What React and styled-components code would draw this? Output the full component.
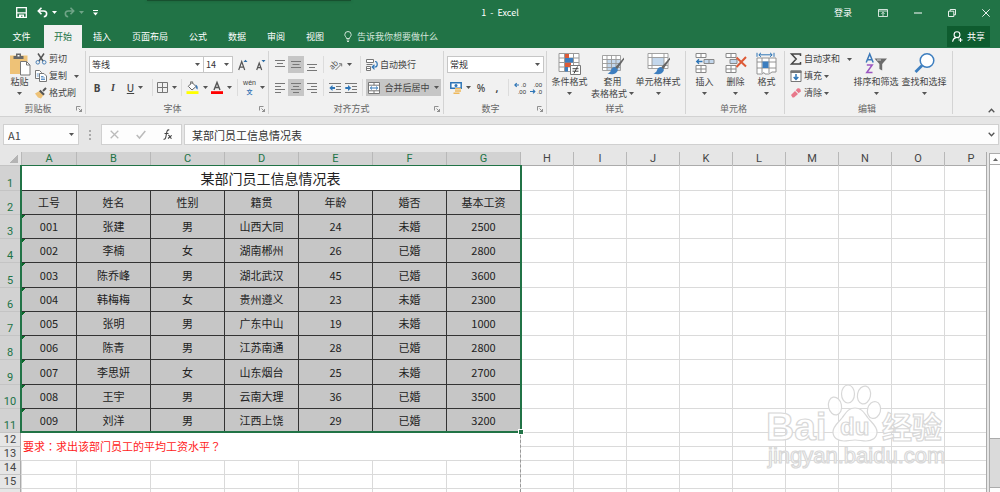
import React from "react";
import styled, { createGlobalStyle, css } from "styled-components";

const GlobalStyle = createGlobalStyle`
  * {
    box-sizing: border-box;
  }
  body {
    margin: 0;
    background: #e6e6e6;
    color: #444;
    font-family: "Noto Sans CJK SC", "Noto Sans", sans-serif;
    font-size: 9px;
    line-height: 12px;
  }
  button,
  input,
  select {
    margin: 0;
    padding: 0;
    border: 0;
    background: none;
    color: inherit;
    font: inherit;
    border-radius: 0;
    outline: 0;
  }
`;

const Window = styled.div`
  height: 100vh;
  display: flex;
  flex-direction: column;
  overflow: hidden;
`;

const Svg = styled.svg`
  display: block;
  flex: none;
  overflow: visible;
`;

/* ---------- title bar ---------- */

const TitleBar = styled.header`
  position: relative;
  flex: none;
  height: 25px;
  display: grid;
  grid-template-columns: 1fr auto 1fr;
  align-items: center;
  background: #217346;
  color: #fff;
`;

const TopShade = styled.div`
  position: absolute;
  top: 0;
  left: 147px;
  width: 204px;
  height: 1px;
  background: #17502f;
  box-shadow: 0 0 3px #17502f;
`;

const QuickAccess = styled.div`
  display: flex;
  align-items: center;
  padding-left: 16px;
`;

const QuickButton = styled.button`
  display: flex;
  align-items: center;
  gap: 4px;
  margin-right: ${(p) => p.$gap || 7}px;
  opacity: ${(p) => (p.disabled ? 0.35 : 1)};
  color: #fff;
`;

const Title = styled.div`
  white-space: pre;
`;

const WindowControls = styled.div`
  display: flex;
  align-items: center;
  justify-content: flex-end;
  gap: 26px;
  padding-right: 10px;
`;

/* ---------- tabs ---------- */

const TabBar = styled.nav`
  flex: none;
  height: 23px;
  display: flex;
  align-items: stretch;
  gap: 1px;
  background: #217346;
  color: #fff;
`;

const Tab = styled.button`
  padding: 0 10px;
  white-space: nowrap;
  ${(p) =>
    p.$active &&
    css`
      background: #f1f1f1;
      color: #217346;
    `}
`;

const FileTab = styled(Tab)`
  width: 43px;
`;

const TellMe = styled.label`
  display: flex;
  align-items: center;
  gap: 5px;
  flex: 1;
  padding-left: 9px;
  input {
    width: 120px;
  }
  input::placeholder {
    color: #d5e6dc;
    opacity: 1;
  }
`;

const Share = styled.button`
  display: flex;
  align-items: center;
  gap: 4px;
  margin: 1px 10px 1px 0;
  padding: 0 5px;
  background: #0e5c2f;
  color: #fff;
`;

/* ---------- ribbon ---------- */

const RibbonBar = styled.section`
  flex: none;
  height: 69px;
  display: flex;
  padding-top: 3px;
  background: #f1f1f1;
  border-bottom: 1px solid #d2d2d2;
`;

const GroupBox = styled.div`
  flex: 0 0 ${(p) => p.$width}px;
  min-width: 0;
  height: 63px;
  display: flex;
  flex-direction: column;
  border-right: 1px solid #d4d4d4;
`;

const GroupBody = styled.div`
  height: 52px;
  display: flex;
  padding-left: ${(p) => p.$pad || 0}px;
`;

const GroupFooter = styled.div`
  height: 11px;
  display: flex;
  align-items: center;
  padding-right: 3px;
  line-height: 11px;
  color: #666;
  span {
    flex: 1;
    text-align: center;
  }
`;

const Lines = styled.div`
  flex: 1;
  display: flex;
  flex-direction: column;
  gap: 6px;
  padding-top: 5px;
`;

const Line = styled.div`
  display: flex;
  align-items: center;
  height: 17px;
`;

const Stack = styled.div`
  flex: none;
  width: ${(p) => p.$width}px;
  display: flex;
  flex-direction: column;
  gap: 1px;
`;

const SmallButton = styled.button`
  height: 16px;
  display: flex;
  align-items: center;
  gap: 2px;
  white-space: nowrap;
  ${(p) =>
    p.$split &&
    css`
      > svg:last-child {
        margin-left: 5px;
      }
    `}
`;

const BigButton = styled.button`
  flex: none;
  width: ${(p) => p.$width}px;
  display: flex;
  flex-direction: column;
  align-items: center;
  padding-top: 1px;
  white-space: nowrap;
  > svg:last-child {
    margin-top: 4px;
  }
`;

const TwoLine = styled.span`
  display: flex;
  flex-direction: column;
  align-items: center;
  line-height: 12px;
  span {
    display: flex;
    align-items: center;
    gap: 2px;
    line-height: 11px;
  }
`;

const Tool = styled.button`
  flex: none;
  width: ${(p) => p.$width || 16}px;
  height: 17px;
  display: flex;
  align-items: center;
  justify-content: center;
  gap: 4px;
  white-space: nowrap;
  background: ${(p) => (p.$on ? "#c6c6c6" : "none")};
`;

const Letter = styled.span`
  font-family: "Noto Sans", sans-serif;
  font-size: 10px;
  font-weight: ${(p) => (p.$bold ? 700 : 500)};
  text-decoration: ${(p) => (p.$underline ? "underline" : "none")};
`;

const ItalicLetter = styled(Letter)`
  font-family: "Liberation Serif", serif;
  font-style: italic;
`;

const Divider = styled.i`
  flex: none;
  width: 1px;
  height: 17px;
  margin: 0 ${(p) => (p.$wide ? 5 : 3)}px;
  background: #dcdcdc;
`;

const ComboBox = styled.div`
  flex: none;
  width: ${(p) => p.$width}px;
  height: 17px;
  display: grid;
  align-items: center;
  background: #fff;
  border: 1px solid #c6c6c6;
  margin-left: ${(p) => (p.$joined ? -1 : 0)}px;
  > * {
    grid-area: 1 / 1;
  }
  > svg {
    justify-self: end;
    margin-right: 3px;
    pointer-events: none;
  }
  select {
    appearance: none;
    width: 100%;
    height: 15px;
    padding-left: 2px;
    line-height: 15px;
    color: #333;
  }
`;

const Collapse = styled.button`
  margin: auto 5px 3px auto;
`;

/* ---------- formula bar ---------- */

const FormulaBar = styled.div`
  flex: none;
  height: 35px;
  display: flex;
  align-items: center;
  padding: 0 1px 0 3px;
  font-size: 11px;
`;

const Field = styled.div`
  height: 21px;
  display: flex;
  align-items: center;
  background: #fdfdfd;
  border: 1px solid #d0d0d0;
`;

const NameBox = styled(Field)`
  width: 76px;
  padding: 0 4px;
  input {
    flex: 1;
    min-width: 0;
  }
`;

const Grip = styled(Svg)`
  margin: 0 10px;
`;

const FormulaTools = styled(Field)`
  width: 81px;
  justify-content: space-around;
`;

const FormulaInput = styled(Field)`
  flex: 1;
  margin-left: 2px;
  padding: 0 3px 0 7px;
  input {
    flex: 1;
    min-width: 0;
    color: #333;
  }
`;

/* ---------- sheet ---------- */

const SheetArea = styled.main`
  flex: 1;
  min-height: 0;
  display: flex;
`;

const Canvas = styled.div`
  position: relative;
  flex: 1;
  min-width: 0;
  overflow: hidden;
  border-right: 1px solid #ababab;
`;

const Grid = styled.table`
  table-layout: fixed;
  width: 964px;
  border-collapse: separate;
  border-spacing: 0;
  background: #fff;
  font-size: 11px;
  line-height: 13px;
  color: #222;
  th,
  td {
    padding: 0;
    text-align: center;
    font-weight: 400;
    white-space: nowrap;
  }
  th {
    font-family: Roboto, sans-serif;
  }
`;

const Col = styled.col`
  width: ${(p) => p.$width}px;
`;

const Corner = styled.th`
  height: 13px;
  background: linear-gradient(135deg, #e6e6e6 50%, #b4b4b4 50%) 10px 3px / 8px
    8px no-repeat #e6e6e6;
`;

const ColHead = styled.th`
  background: ${(p) => (p.$selected ? "#d2d2d2" : "#e6e6e6")};
  color: ${(p) => (p.$selected ? "#217346" : "#444")};
  border-left: 1px solid #b8b8b8;
`;

const Row = styled.tr`
  height: ${(p) => p.$height}px;
`;

const RowHead = styled.th`
  vertical-align: bottom;
  background: ${(p) => (p.$selected ? "#d2d2d2" : "#e6e6e6")};
  color: ${(p) => (p.$selected ? "#217346" : "#444")};
  border-top: 1px solid #c4c4c4;
  border-right: 1px solid #ababab;
`;

const Cell = styled.td`
  border-left: 1px solid #dadada;
  border-top: 1px solid ${(p) => (p.$first ? "#ababab" : "#dadada")};
`;

const DataCell = styled.td`
  background: #c6c6c6;
  border-left: 1px solid #333;
  border-top: 1px solid #333;
  ${(p) =>
    p.$flag &&
    css`
      background: linear-gradient(135deg, #0b6b2c 50%, transparent 50%) 0 0 /
        4px 4px no-repeat #c6c6c6;
    `}
`;

const TitleCell = styled.td`
  font-size: 14px;
  line-height: 18px;
`;

const NoteCell = styled.td`
  && {
    text-align: left;
    padding-left: 2px;
  }
  font-family: "Noto Sans CJK TC", sans-serif;
  color: #f22;
`;

const Selection = styled.div`
  position: absolute;
  top: 13px;
  left: 20px;
  width: 502px;
  height: 268px;
  border: 2px solid #217346;
  border-top-width: 1px;
  pointer-events: none;
  &::after {
    content: "";
    position: absolute;
    right: -3px;
    bottom: -3px;
    width: 4px;
    height: 4px;
    background: #217346;
    outline: 1px solid #fff;
  }
`;

const PageBreak = styled.div`
  position: absolute;
  top: 283px;
  bottom: 0;
  left: 520px;
  border-left: 1px dashed #999;
`;

const Watermark = styled.svg`
  position: absolute;
  top: 230px;
  left: 764px;
  overflow: visible;
  pointer-events: none;
`;

const ScrollBar = styled.div`
  flex: none;
  width: 11px;
  margin: 1px 0 0 2px;
  display: flex;
  flex-direction: column;
  border-left: 1px solid #ababab;
`;

const ScrollButton = styled.button`
  height: 12px;
  display: flex;
  align-items: center;
  justify-content: center;
  background: #fdfdfd;
  border-top: 1px solid #ababab;
  border-bottom: 1px solid #ababab;
`;

const Thumb = styled.div`
  flex: 85 0 0;
  background: #fff;
  border-bottom: 1px solid #ababab;
`;

const Track = styled.div`
  flex: 15 0 0;
  background: #dadada;
`;

const ScrollEnd = styled.div`
  flex: none;
  height: 5px;
  background: #fdfdfd;
  border-top: 1px solid #ababab;
`;

/* ---------- icons ---------- */

const Caret = ({ color = "#555" }) => (
  <Svg width="5" height="3" viewBox="0 0 5 3">
    <path d="M0 0h5L2.500 3z" fill={color} />
  </Svg>
);

const SaveIcon = () => (
  <Svg width="11" height="11" viewBox="0 0 11 11">
    <path d="M.7.7h9.600v9.600H.7z" fill="none" stroke="#fff" strokeWidth="1.300" />
    <path d="M1 5.200h9v1.300H1zM3 7.500h5V10H6.500V8.700H5V10H3z" fill="#fff" />
  </Svg>
);

const UndoIcon = ({ flip }) => (
  <Svg width="11" height="11" viewBox="0 0 11 11">
    <g transform={flip ? "translate(11 0) scale(-1 1)" : undefined}>
      <path
        d="M1.500 4h5.300a2.800 2.800 0 0 1 0 5.700M4.500.8 1.300 4l3.200 3.200"
        fill="none"
        stroke="#fff"
        strokeWidth="1.600"
      />
    </g>
  </Svg>
);

const CustomizeIcon = () => (
  <Svg width="5" height="6" viewBox="0 0 5 6">
    <path d="M0 0h5v1H0zM0 2.500h5L2.500 5.500z" fill="#fff" />
  </Svg>
);

const RibbonOptionsIcon = () => (
  <Svg width="10" height="8" viewBox="0 0 10 8">
    <path
      d="M.5.5h9v7h-9zM.5 2h9M5 7V3.500M3.500 4.800 5 3.300l1.500 1.500"
      fill="none"
      stroke="#fff"
      strokeWidth=".8"
    />
  </Svg>
);

const MinimizeIcon = () => (
  <Svg width="8" height="8" viewBox="0 0 8 8">
    <path d="M0 4h8" stroke="#fff" />
  </Svg>
);

const RestoreIcon = () => (
  <Svg width="8" height="8" viewBox="0 0 8 8">
    <path
      d="M.5 2.200h5.300v5.300H.5zM2.200 2V.5h5.300v5.300H6"
      fill="none"
      stroke="#fff"
      strokeWidth=".9"
    />
  </Svg>
);

const CloseIcon = () => (
  <Svg width="8" height="8" viewBox="0 0 8 8">
    <path d="m.3.3 7.400 7.400M7.700.3.3 7.700" stroke="#fff" strokeWidth=".9" />
  </Svg>
);

const BulbIcon = () => (
  <Svg width="8" height="11" viewBox="0 0 8 11">
    <path
      d="M2.500 7.500C2.500 6 .8 5.500.8 3.700a3.200 3.200 0 0 1 6.400 0c0 1.800-1.700 2.300-1.700 3.800zM2.700 9h2.600M3 10.500h2"
      fill="none"
      stroke="#e3efe8"
      strokeWidth=".9"
    />
  </Svg>
);

const ShareIcon = () => (
  <Svg width="11" height="11" viewBox="0 0 11 11">
    <circle cx="5" cy="3.700" r="2.900" fill="none" stroke="#fff" strokeWidth="1.100" />
    <path
      d="M.6 10.700c.3-2.400 1.500-3.600 3.300-4.100M6.300 6.600l1 .6M8.500 7v4M6.500 9h4"
      fill="none"
      stroke="#fff"
      strokeWidth="1.100"
    />
  </Svg>
);

const PasteIcon = () => (
  <Svg width="22" height="24" viewBox="0 0 22 24">
    <path d="M1 3.500h17.500V22H1z" fill="#eec277" />
    <path d="M4.500 4H7V1.500h5V4h2.500v3h-10z" fill="#666" />
    <path d="M8.500 3h2v1.500h-2z" fill="#fff" />
    <path d="M11.500 9.500h6l3.500 3.500v10h-9.500z" fill="#fff" stroke="#777" />
    <path d="M17.500 9.500V13H21" fill="none" stroke="#777" />
  </Svg>
);

const CutIcon = () => (
  <Svg width="12" height="12" viewBox="0 0 12 12">
    <path
      d="M3 .5 8 8M9 .5 4 8"
      stroke="#555"
      strokeWidth="1.500"
      fill="none"
    />
    <circle cx="2.800" cy="9.300" r="1.800" fill="none" stroke="#4a7fb5" />
    <circle cx="9.200" cy="9.300" r="1.800" fill="none" stroke="#4a7fb5" />
  </Svg>
);

const CopyIcon = () => (
  <Svg width="12" height="12" viewBox="0 0 12 12">
    <path d="M.5.500h4l2 2v6h-6z" fill="#fff" stroke="#777" />
    <path d="M4.500 3.500h4.500l2.500 2.500v5.500h-7z" fill="#fff" stroke="#777" />
    <path d="M1.800 4h2M1.800 6h2M6 6.500h2.500M6 8h4M6 9.500h4" stroke="#3b78b8" strokeWidth=".8" />
  </Svg>
);

const BrushIcon = () => (
  <Svg width="12" height="12" viewBox="0 0 12 12">
    <path d="M0 6.500 4.500 4l4 4L6 11.500 3 10.500z" fill="#eec277" />
    <path d="m4 4.300 1.500-1.500 4.300 4.300-1.500 1.500z" fill="#555" />
    <path d="m8 4 3-3" stroke="#555" strokeWidth="2" />
  </Svg>
);

const LauncherIcon = () => (
  <Svg width="6" height="6" viewBox="0 0 6 6">
    <path d="M.5 4.500v-4h4M2.500 2.500l3 3M5.500 3v2.500H3" fill="none" stroke="#777" strokeWidth=".8" />
  </Svg>
);

const GrowIcon = ({ shrink }) => (
  <Svg width="10" height="12" viewBox="0 0 10 12">
    <path
      d={shrink ? "m.7 11 2.500-7 2.500 7M1.600 8.700h3.200" : "m.7 11 3-8.500 3 8.500M1.700 8.200h4"}
      fill="none"
      stroke="#555"
      strokeWidth="1.200"
    />
    <path d={shrink ? "M5.500 1h4l-2 2.300z" : "M5.500 3h4l-2-2.300z"} fill="#2e6da4" />
  </Svg>
);

const BorderIcon = () => (
  <Svg width="11" height="11" viewBox="0 0 11 11">
    <path d="M.5.5h10v10H.5zM5.500.5v10M.5 5.500h10" fill="none" stroke="#777" />
  </Svg>
);

const FillIcon = () => (
  <Svg width="13" height="13" viewBox="0 0 13 13">
    <path d="m6 1.500 4 4-4 3.500-3.700-3.700z" fill="#fff" stroke="#666" />
    <path d="M4.500 3.500V.8h2.200v2" fill="none" stroke="#666" strokeWidth=".8" />
    <path d="M9.500 3.500c2.500 1 2.500 3 2 5-1.500-.5-1.500-2-2-5z" fill="#3b78b8" />
    <path d="M.5 10.200h12v2.800H.5z" fill="#ff0" />
  </Svg>
);

const FontColorIcon = () => (
  <Svg width="12" height="13" viewBox="0 0 12 13">
    <path d="m3 9 3-7.500L9 9M4 6.500h4" fill="none" stroke="#555" strokeWidth="1.400" />
    <path d="M0 10.200h12v2.800H0z" fill="#f00" />
  </Svg>
);

const PhoneticIcon = () => (
  <Svg width="13" height="13" viewBox="0 0 13 13">
    <text
      x="6.500"
      y="4"
      fontSize="7"
      textAnchor="middle"
      fill="#444"
      fontFamily="Liberation Sans, sans-serif"
    >
      wén
    </text>
    <text x="6.500" y="13" fontSize="6" fontWeight="700" textAnchor="middle" fill="#3b78b8">
      文
    </text>
  </Svg>
);

const ALIGN = {
  top: "M0 1.500h10M2 4.500h6M0 7.500h10",
  middle: "M0 2.500h10M1.500 5.500h7M0 8.500h10",
  bottom: "M0 5.500h10M2 8.500h6M0 11.500h10",
  left: "M0 1.500h10M0 4.500h6M0 7.500h10M0 10.500h6",
  center: "M0 1.500h10M2 4.500h6M0 7.500h10M2 10.500h6",
  right: "M0 1.500h10M4 4.500h6M0 7.500h10M4 10.500h6",
};

const AlignIcon = ({ kind }) => (
  <Svg width="10" height="12" viewBox="0 0 10 12">
    <path d={ALIGN[kind]} stroke="#777" />
  </Svg>
);

const OrientationIcon = () => (
  <Svg width="12" height="12" viewBox="0 0 12 12">
    <text x="-1" y="8" fontSize="8" fill="#555" transform="rotate(-45 4 7)">
      ab
    </text>
    <path d="m4.500 11 6-6M8 4.700h2.700v2.700" fill="none" stroke="#777" />
  </Svg>
);

const IndentIcon = ({ out }) => (
  <Svg width="12" height="12" viewBox="0 0 12 12">
    <path d="M0 1.500h12M7 4.500h5M7 7.500h5M0 10.500h12" stroke="#777" />
    <path
      d={out ? "M3.500 3v2H6v2H3.500v2L.3 6z" : "M3 3v2H.3v2H3v2l3.200-3z"}
      fill="#2e75b6"
    />
  </Svg>
);

const WrapIcon = () => (
  <Svg width="12" height="12" viewBox="0 0 12 12">
    <path d="M.5.5h7v3h-7zM.5 5.500h6M.5 7.500h4v4h-4zM.5 9.500h4" fill="#fff" stroke="#777" />
    <path d="M9 2.500c3 0 3 5.500 0 5.500H6.500M8.500 5.800 6.200 8l2.300 2.300" fill="none" stroke="#2e75b6" strokeWidth="1.200" />
  </Svg>
);

const MergeIcon = () => (
  <Svg width="12" height="12" viewBox="0 0 12 12">
    <path d="M.5.5h11v11H.5zM.5 3.200h11M.5 8.800h11M6 .5v2.700M6 8.800v2.700" fill="#fff" stroke="#777" />
    <path d="M2.500 6h7M4 4.500 2.300 6 4 7.500M8 4.500 9.700 6 8 7.500" fill="none" stroke="#2e75b6" />
  </Svg>
);

const CurrencyIcon = () => (
  <Svg width="12" height="12" viewBox="0 0 12 12">
    <path d="M.8.8h10.400v5.400H.8z" fill="#fff" stroke="#2e75b6" strokeWidth="1.500" />
    <circle cx="6" cy="3.500" r="1.500" fill="#2e75b6" />
    <path d="M5 6h6v1.500H5zM5 8.200h6v1.500H5zM3.500 10.400h6v1.500h-6z" fill="#eeb85a" />
  </Svg>
);

const DecimalIcon = ({ less }) => (
  <Svg width="12" height="12" viewBox="0 0 12 12" fontFamily="Liberation Sans, sans-serif">
    <text x="12" y="5" fontSize="6" textAnchor="end" fill="#333">
      {less ? ".00" : ".0"}
    </text>
    <text x="12" y="12" fontSize="6" textAnchor="end" fill="#333">
      {less ? ".0" : ".00"}
    </text>
    <path
      d={less ? "M0 9.500h4.500M3 7.700 4.800 9.500 3 11.300" : "M1 3h4M2.700 1.200.9 3l1.800 1.800"}
      fill="none"
      stroke="#2e75b6"
      strokeWidth="1.200"
    />
  </Svg>
);

const ConditionalIcon = () => (
  <Svg width="23" height="24" viewBox="0 0 23 24">
    <path d="M1 1.500h20v18H1zM1 6h20M1 10.500h20M1 15h20M6.500 1.500v18M15.500 1.500v18" fill="#fff" stroke="#999" />
    <path d="M7 2h4v4H7zM7 10.500h6V15H7z" fill="#dd5a36" />
    <path d="M7 6h8v4.500H7zM7 15h3v4.500H7z" fill="#3d7ebf" />
    <path d="M12.500 13.500h10v9h-10z" fill="#fff" stroke="#777" />
    <path d="M14.500 16.700h6M14.500 19.200h6M19.500 14.500l-3.500 7" stroke="#444" fill="none" />
  </Svg>
);

const TableBrush = () => (
  <g>
    <path d="m23 5.500-9 10 2 2 7-10z" fill="#666" />
    <path d="M14 15c-2.500 0-3.500 1.500-4 3.300-.5 1.700-2 2.700-3.500 3.200 4 1.500 9.500 1 10.500-3.700z" fill="#3d7ebf" />
  </g>
);

const TableFormatIcon = () => (
  <Svg width="23" height="24" viewBox="0 0 23 24">
    <path d="M1.500 3.500h18v15h-18z" fill="#fff" />
    <path d="M6 7.500h13.500v11H6z" fill="#c3d7ec" />
    <path
      d="M1.500 3.500h18v15h-18zM1.500 7.500h18M1.500 11.500h18M1.500 15.500h18M6 3.500v15M10.500 3.500v15M15 3.500v15"
      fill="none"
      stroke="#999"
      strokeWidth=".9"
    />
    <TableBrush />
  </Svg>
);

const CellStyleIcon = () => (
  <Svg width="23" height="24" viewBox="0 0 23 24">
    <path d="M1 1.500h20v15H1z" fill="#fff" />
    <path d="M5 5.500h12v8H5z" fill="#c3d7ec" />
    <path d="M1 1.500h20v15H1zM1 5.500h20M1 13.500h20M5 1.500v15M17 1.500v15" fill="none" stroke="#999" strokeWidth=".9" />
    <TableBrush />
  </Svg>
);

const InsertIcon = () => (
  <Svg width="20" height="24" viewBox="0 0 20 24">
    <path d="M1 1.500h10v4H1zM6 1.500v4M1 13.500h10v7H1zM6 13.500v7M1 17h10" fill="#fff" stroke="#888" />
    <path d="M9 7.500h10v4H9zM14 7.500v4" fill="#c3d7ec" stroke="#888" />
    <path d="M1.500 9.500h6M4 7.300 1.700 9.500 4 11.700" fill="none" stroke="#2e75b6" strokeWidth="1.300" />
  </Svg>
);

const DeleteIcon = () => (
  <Svg width="22" height="24" viewBox="0 0 22 24">
    <path d="M1 1.500h10v4H1zM6 1.500v4M1 13.500h10v7H1zM6 13.500v7M1 17h10" fill="#fff" stroke="#888" />
    <path d="M5 7.500h7v4H5z" fill="#c3d7ec" stroke="#888" />
    <path d="m11.500 5.500 9.500 9M21 5 11.500 15" stroke="#dd5a36" strokeWidth="2" />
  </Svg>
);

const FormatIcon = () => (
  <Svg width="21" height="24" viewBox="0 0 21 24">
    <path d="M1 .8v4M18 .8v4M3 2.800h13M5 .8l-2.200 2L5 4.800M14 .8l2.200 2L14 4.800" fill="none" stroke="#2e75b6" />
    <path d="M1 6h19v14h-4l-3 2H9l-1-1.500L6 22H1z" fill="#fff" />
    <path d="M1 6h19v14h-4l-3 2H9l-1-1.500L6 22H1zM1 10h19M1 16h19M6 6v15M13 6v15" fill="none" stroke="#888" strokeWidth=".9" />
    <path d="M6.500 9.500h6v6.500h-6z" fill="#3d7ebf" />
  </Svg>
);

const SumIcon = () => (
  <Svg width="12" height="12" viewBox="0 0 12 12">
    <path d="M10.500 3V1H1.500l4.700 5-4.700 5h9V9" fill="none" stroke="#444" strokeWidth="1.500" />
  </Svg>
);

const FillDownIcon = () => (
  <Svg width="12" height="12" viewBox="0 0 12 12">
    <path d="M1 1h10v10.500H1z" fill="#fff" stroke="#777" />
    <path d="M.5.5h11V3H.5z" fill="#777" />
    <path d="M6 4v5.500M3.700 7 6 9.500 8.300 7" fill="none" stroke="#2e75b6" strokeWidth="1.500" />
  </Svg>
);

const EraserIcon = () => (
  <Svg width="12" height="12" viewBox="0 0 12 12">
    <path d="m1 8 4-4 3 3-4 3.500H2.500z" fill="#e8788a" />
    <path d="m5.700 3.300 2-2h1.500l1.500 1.500v1.500l-2 2z" fill="#e8788a" />
  </Svg>
);

const SortIcon = () => (
  <Svg width="22" height="24" viewBox="0 0 22 24">
    <path d="m1.200 10.500 3.500-8.500 3.500 8.500M2.500 7.800h4.500" fill="none" stroke="#3b78b8" strokeWidth="1.500" />
    <path d="M1.800 13h5.400l-5.400 7.500h5.700" fill="none" stroke="#9a55c0" strokeWidth="1.500" />
    <path d="M9.500 6.500H22L17.200 12v6.500L14.400 17v-5z" fill="#6b6b6b" />
    <path d="M12 8h4" stroke="#ddd" />
  </Svg>
);

const FindIcon = () => (
  <Svg width="21" height="24" viewBox="0 0 21 24">
    <circle cx="13" cy="8.500" r="6.800" fill="#fff" stroke="#3d7ebf" strokeWidth="1.500" />
    <path d="m8 13.500-6.500 6.500" stroke="#3d7ebf" strokeWidth="2.800" />
  </Svg>
);

const ChevronIcon = ({ up }) => (
  <Svg width="7" height="5" viewBox="0 0 7 5">
    <path d={up ? "M.7 4.200 3.500 1.200l2.800 3" : "M.7.8l2.800 3 2.800-3"} fill="none" stroke="#555" strokeWidth="1.300" />
  </Svg>
);

/* ---------- parts ---------- */

const Group = ({ width, label, pad, launcher, children }) => (
  <GroupBox $width={width}>
    <GroupBody $pad={pad}>{children}</GroupBody>
    <GroupFooter>
      <span>{label}</span>
      {launcher && (
        <button aria-label={label}>
          <LauncherIcon />
        </button>
      )}
    </GroupFooter>
  </GroupBox>
);

const Combo = ({ label, value, width, joined }) => (
  <ComboBox $width={width} $joined={joined}>
    <select aria-label={label} defaultValue={value}>
      <option>{value}</option>
    </select>
    <Caret />
  </ComboBox>
);

const Big = ({ width, icon, label }) => (
  <BigButton $width={width}>
    {icon}
    <span>{label}</span>
    <Caret />
  </BigButton>
);

const Ribbon = () => (
  <RibbonBar>
    <Group width={86} label="剪贴板" pad={4} launcher>
      <Big width={31} icon={<PasteIcon />} label="粘贴" />
      <Stack $width={46}>
        <SmallButton>
          <CutIcon />
          剪切
        </SmallButton>
        <SmallButton $split>
          <CopyIcon />
          复制
          <Caret />
        </SmallButton>
        <SmallButton>
          <BrushIcon />
          格式刷
        </SmallButton>
      </Stack>
    </Group>

    <Group width={183} label="字体" pad={3} launcher>
      <Lines>
        <Line>
          <Combo label="字体" value="等线" width={115} />
          <Combo label="字号" value="14" width={30} joined />
          <Tool $width={20} aria-label="增大字号">
            <GrowIcon />
          </Tool>
          <Tool aria-label="减小字号">
            <GrowIcon shrink />
          </Tool>
        </Line>
        <Line>
          <Tool>
            <Letter $bold>B</Letter>
          </Tool>
          <Tool>
            <ItalicLetter $bold>I</ItalicLetter>
          </Tool>
          <Tool $width={28}>
            <Letter $underline>U</Letter>
            <Caret />
          </Tool>
          <Divider />
          <Tool $width={22} aria-label="边框">
            <BorderIcon />
            <Caret />
          </Tool>
          <Divider />
          <Tool $width={23} aria-label="填充颜色">
            <FillIcon />
            <Caret />
          </Tool>
          <Tool $width={26} aria-label="字体颜色">
            <FontColorIcon />
            <Caret />
          </Tool>
          <Divider />
          <Tool $width={25} aria-label="拼音">
            <PhoneticIcon />
            <Caret />
          </Tool>
        </Line>
      </Lines>
    </Group>

    <Group width={175} label="对齐方式" pad={3} launcher>
      <Lines>
        <Line>
          <Tool aria-label="顶端对齐">
            <AlignIcon kind="top" />
          </Tool>
          <Tool $on aria-label="垂直居中">
            <AlignIcon kind="middle" />
          </Tool>
          <Tool aria-label="底端对齐">
            <AlignIcon kind="bottom" />
          </Tool>
          <Divider />
          <Tool $width={28} aria-label="方向">
            <OrientationIcon />
            <Caret />
          </Tool>
          <Divider $wide />
          <SmallButton>
            <WrapIcon />
            自动换行
          </SmallButton>
        </Line>
        <Line>
          <Tool aria-label="左对齐">
            <AlignIcon kind="left" />
          </Tool>
          <Tool $on aria-label="居中">
            <AlignIcon kind="center" />
          </Tool>
          <Tool aria-label="右对齐">
            <AlignIcon kind="right" />
          </Tool>
          <Divider />
          <Tool aria-label="减少缩进量">
            <IndentIcon out />
          </Tool>
          <Tool aria-label="增加缩进量">
            <IndentIcon />
          </Tool>
          <Divider />
          <Tool $on $width={75}>
            <MergeIcon />
            合并后居中
            <Caret />
          </Tool>
        </Line>
      </Lines>
    </Group>

    <Group width={103} label="数字" pad={3} launcher>
      <Lines>
        <Line>
          <Combo label="数字格式" value="常规" width={97} />
        </Line>
        <Line>
          <Tool $width={26} aria-label="会计数字格式">
            <CurrencyIcon />
            <Caret />
          </Tool>
          <Tool>
            <Letter>%</Letter>
          </Tool>
          <Tool>
            <Letter $bold>,</Letter>
          </Tool>
          <Divider />
          <Tool aria-label="增加小数位数">
            <DecimalIcon />
          </Tool>
          <Tool aria-label="减少小数位数">
            <DecimalIcon less />
          </Tool>
        </Line>
      </Lines>
    </Group>

    <Group width={139} label="样式" pad={1}>
      <Big width={43} icon={<ConditionalIcon />} label="条件格式" />
      <BigButton $width={43}>
        <TableFormatIcon />
        <TwoLine>
          套用
          <span>
            表格格式
            <Caret />
          </span>
        </TwoLine>
      </BigButton>
      <Big width={48} icon={<CellStyleIcon />} label="单元格样式" />
    </Group>

    <Group width={99} label="单元格" pad={3}>
      <Big width={31} icon={<InsertIcon />} label="插入" />
      <Big width={31} icon={<DeleteIcon />} label="删除" />
      <Big width={31} icon={<FormatIcon />} label="格式" />
    </Group>

    <Group width={168} label="编辑" pad={5}>
      <Stack $width={62}>
        <SmallButton $split>
          <SumIcon />
          自动求和
          <Caret />
        </SmallButton>
        <SmallButton>
          <FillDownIcon />
          填充
          <Caret />
        </SmallButton>
        <SmallButton>
          <EraserIcon />
          清除
          <Caret />
        </SmallButton>
      </Stack>
      <Big width={48} icon={<SortIcon />} label="排序和筛选" />
      <Big width={48} icon={<FindIcon />} label="查找和选择" />
    </Group>
    <Collapse aria-label="折叠功能区">
      <ChevronIcon up />
    </Collapse>
  </RibbonBar>
);

const tabs = ["开始", "插入", "页面布局", "公式", "数据", "审阅", "视图"];

const columns = [
  ["A", 55],
  ["B", 74],
  ["C", 74],
  ["D", 74],
  ["E", 74],
  ["F", 74],
  ["G", 74],
  ["H", 53],
  ["I", 53],
  ["J", 53],
  ["K", 53],
  ["L", 53],
  ["M", 53],
  ["N", 53],
  ["O", 53],
  ["P", 53],
];

const blankColumns = columns.slice(7);

const records = [
  ["工号", "姓名", "性别", "籍贯", "年龄", "婚否", "基本工资"],
  ["001", "张建", "男", "山西大同", "24", "未婚", "2500"],
  ["002", "李楠", "女", "湖南郴州", "26", "已婚", "2800"],
  ["003", "陈乔峰", "男", "湖北武汉", "45", "已婚", "3600"],
  ["004", "韩梅梅", "女", "贵州遵义", "23", "未婚", "2300"],
  ["005", "张明", "男", "广东中山", "19", "未婚", "1000"],
  ["006", "陈青", "男", "江苏南通", "28", "已婚", "2800"],
  ["007", "李思妍", "女", "山东烟台", "25", "未婚", "2700"],
  ["008", "王宇", "男", "云南大理", "36", "已婚", "3500"],
  ["009", "刘洋", "男", "江西上饶", "29", "已婚", "3200"],
];

const rowHeights = [24, 24, 24, 25, 24, 24, 24, 25, 24, 24];

const Blanks = ({ first }) =>
  blankColumns.map(([name]) => <Cell key={name} $first={first} />);

const Sheet = () => (
  <Grid>
    <colgroup>
      <Col $width={21} />
      {columns.map(([name, width]) => (
        <Col key={name} $width={width} />
      ))}
    </colgroup>
    <thead>
      <tr>
        <Corner />
        {columns.map(([name], i) => (
          <ColHead key={name} $selected={i < 7}>
            {name}
          </ColHead>
        ))}
      </tr>
    </thead>
    <tbody>
      <Row $height={25}>
        <RowHead $selected>1</RowHead>
        <TitleCell colSpan={7}>某部门员工信息情况表</TitleCell>
        <Blanks first />
      </Row>
      {records.map((record, i) => (
        <Row key={record[0]} $height={rowHeights[i]}>
          <RowHead $selected>{i + 2}</RowHead>
          {record.map((value, j) => (
            <DataCell key={j} $flag={i > 0 && j === 0}>
              {value}
            </DataCell>
          ))}
          <Blanks />
        </Row>
      ))}
      <Row $height={14}>
        <RowHead>12</RowHead>
        <NoteCell colSpan={7} rowSpan={2}>
          要求：求出该部门员工的平均工资水平？
        </NoteCell>
        <Blanks />
      </Row>
      <Row $height={14}>
        <RowHead>13</RowHead>
        <Blanks />
      </Row>
      {[14, 15, ""].map((n) => (
        <Row key={n} $height={14}>
          <RowHead>{n}</RowHead>
          {columns.map(([name]) => (
            <Cell key={name} />
          ))}
        </Row>
      ))}
    </tbody>
  </Grid>
);

const BaiduMark = () => (
  <Watermark width="184" height="90" viewBox="0 0 184 90">
    <g
      fill="#fff"
      fillOpacity=".85"
      stroke="#d8d8d8"
      strokeWidth="1.200"
      fontFamily="Liberation Sans, Noto Sans CJK SC, sans-serif"
    >
      <ellipse cx="84" cy="12" rx="6.500" ry="9" />
      <ellipse cx="100" cy="13" rx="6.500" ry="9" transform="rotate(12 100 13)" />
      <ellipse cx="71" cy="24" rx="6.500" ry="9" transform="rotate(-12 71 24)" />
      <ellipse cx="110" cy="28" rx="6.500" ry="8.500" transform="rotate(14 110 28)" />
      <path d="M91 26c7 0 9 5 13 10s9 8 9 14-5 9-11 9c-4 0-7-1-11-1s-7 1-11 1c-6 0-11-3-11-9s5-9 9-14 6-10 13-10z" />
      <text x="2" y="58" fontSize="39" fontWeight="700">
        Bai
      </text>
      <text x="76" y="53" fontSize="24" fontWeight="700">
        du
      </text>
      <text x="118" y="56" fontSize="30" fontWeight="700">
        经验
      </text>
      <text x="4" y="81" fontSize="22">
        jingyan.baidu.com
      </text>
    </g>
  </Watermark>
);

const App = () => (
  <Window>
    <GlobalStyle />
    <TitleBar>
      <TopShade />
      <QuickAccess>
        <QuickButton $gap={10} aria-label="保存">
          <SaveIcon />
        </QuickButton>
        <QuickButton aria-label="撤消">
          <UndoIcon />
          <Caret color="#fff" />
        </QuickButton>
        <QuickButton $gap={9} aria-label="恢复" disabled>
          <UndoIcon flip />
          <Caret color="#fff" />
        </QuickButton>
        <QuickButton aria-label="自定义快速访问工具栏">
          <CustomizeIcon />
        </QuickButton>
      </QuickAccess>
      <Title>{"1  -  Excel"}</Title>
      <WindowControls>
        <button>登录</button>
        <button aria-label="功能区显示选项">
          <RibbonOptionsIcon />
        </button>
        <button aria-label="最小化">
          <MinimizeIcon />
        </button>
        <button aria-label="还原">
          <RestoreIcon />
        </button>
        <button aria-label="关闭">
          <CloseIcon />
        </button>
      </WindowControls>
    </TitleBar>

    <TabBar>
      <FileTab>文件</FileTab>
      {tabs.map((tab, i) => (
        <Tab key={tab} $active={i === 0}>
          {tab}
        </Tab>
      ))}
      <TellMe>
        <BulbIcon />
        <input type="text" placeholder="告诉我你想要做什么" />
      </TellMe>
      <Share>
        <ShareIcon />
        共享
      </Share>
    </TabBar>

    <Ribbon />

    <FormulaBar>
      <NameBox>
        <input type="text" aria-label="名称框" defaultValue="A1" />
        <Caret />
      </NameBox>
      <Grip width="2" height="10" viewBox="0 0 2 10">
        <path d="M0 0h2v2H0zM0 4h2v2H0zM0 8h2v2H0z" fill="#aaa" />
      </Grip>
      <FormulaTools>
        <button aria-label="取消">
          <Svg width="9" height="9" viewBox="0 0 9 9">
            <path d="m.7.7 7.600 7.600M8.300.7.7 8.300" stroke="#bbb" strokeWidth="1.300" />
          </Svg>
        </button>
        <button aria-label="输入">
          <Svg width="10" height="9" viewBox="0 0 10 9">
            <path d="M.7 5 3.500 8 9.300 1" fill="none" stroke="#bbb" strokeWidth="1.500" />
          </Svg>
        </button>
        <button aria-label="插入函数">
          <Svg width="10" height="11" viewBox="0 0 10 11">
            <path
              d="M.5 10.200c2 .5 2.300-1.500 2.700-4C3.700 3 4 .3 6.300 1M1.500 4.500h4M5.200 6.500c1.800-.8 1.800 3.500 3.500 2.700M8.700 6.300 5 9.500"
              fill="none"
              stroke="#444"
              strokeWidth="1.100"
            />
          </Svg>
        </button>
      </FormulaTools>
      <FormulaInput>
        <input type="text" aria-label="编辑栏" defaultValue="某部门员工信息情况表" />
        <button aria-label="展开编辑栏">
          <ChevronIcon />
        </button>
      </FormulaInput>
    </FormulaBar>

    <SheetArea>
      <Canvas>
        <Sheet />
        <Selection />
        <PageBreak />
        <BaiduMark />
      </Canvas>
      <ScrollBar>
        <ScrollButton aria-label="向上滚动">
          <Svg width="5" height="3" viewBox="0 0 5 3">
            <path d="M0 3h5L2.500 0z" fill="#666" />
          </Svg>
        </ScrollButton>
        <Thumb />
        <Track />
        <ScrollEnd />
      </ScrollBar>
    </SheetArea>
  </Window>
);

export default App;
